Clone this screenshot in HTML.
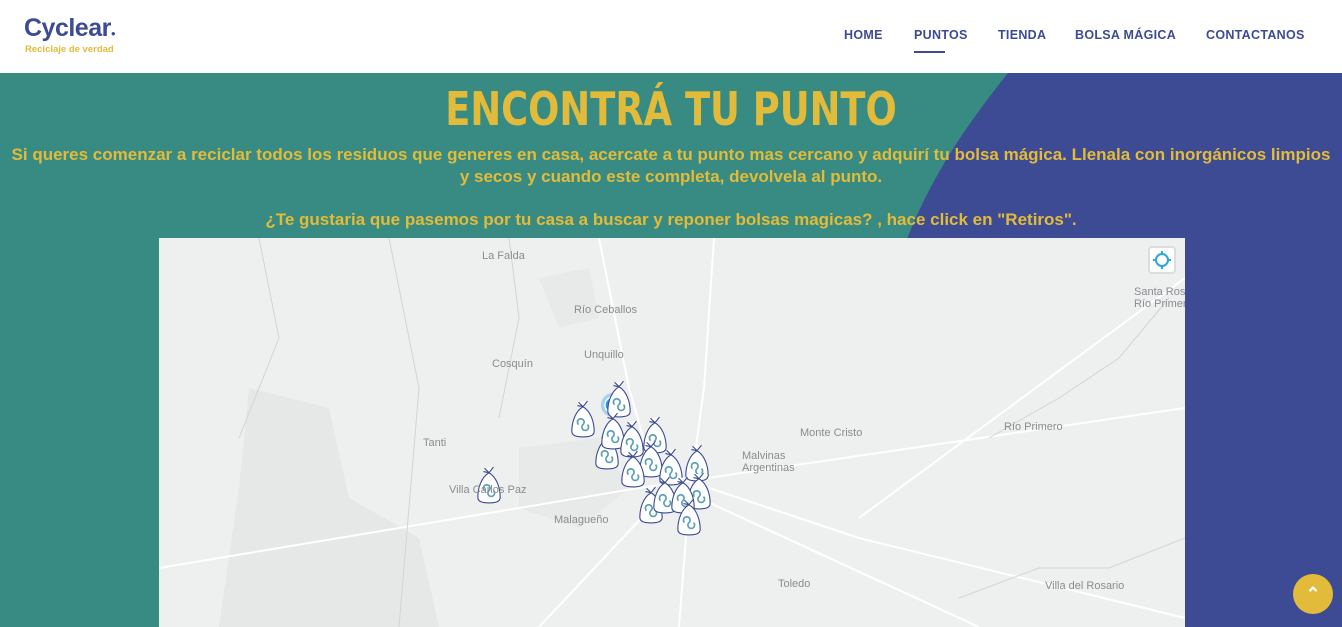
<!DOCTYPE html>
<html><head><meta charset="utf-8"><style>
*{margin:0;padding:0;box-sizing:border-box}
body{width:1342px;height:627px;overflow:hidden;font-family:"Liberation Sans",sans-serif;background:#378b82;position:relative}
header{position:absolute;top:0;left:0;width:1342px;height:73px;background:#fff;z-index:5}
.logo{position:absolute;left:24px;top:14px;color:#3c4b94;font-size:25px;font-weight:bold;letter-spacing:-0.5px}
.logo .d{color:#3c4b94;font-size:8px}
.tag{position:absolute;left:25px;top:44px;color:#e3bb3a;font-size:9.5px;font-weight:bold}
nav a{position:absolute;top:28px;font-size:12.5px;font-weight:bold;color:#3c4b94;letter-spacing:0.3px;text-decoration:none}
.u{position:absolute;left:914px;top:51px;width:31px;height:2px;background:#3c4b94}
.bg{position:absolute;left:0;top:73px}
h1{position:absolute;top:82px;left:0;width:1342px;text-align:center;color:#e3bb3a;font-size:46px;font-weight:900;font-family:"DejaVu Sans",sans-serif;transform:scaleX(0.8);transform-origin:671px 0}
p{position:absolute;left:0;width:1342px;text-align:center;color:#e3bb3a;font-size:17px;font-weight:bold;line-height:22px;font-family:"Liberation Sans",sans-serif}
.map{position:absolute;left:159px;top:238px;width:1026px;height:389px;background:#eeefef;overflow:hidden}
.lbl{position:absolute;font-size:11px;color:#8a8d90;white-space:nowrap}
.loc{position:absolute;left:989px;top:8px;width:28px;height:28px;background:#fff;border:2px solid #ddd;border-radius:4px}
.top{position:absolute;left:1293px;top:574px;width:40px;height:40px;border-radius:50%;background:#e3bb3a;color:#fff;text-align:center;font-size:18px;line-height:40px;font-weight:bold}
</style></head><body>
<header>
<div class="logo">Cyclear<span class="d">●</span></div>
<div class="tag">Reciclaje de verdad</div>
<nav><a style="left:844px">HOME</a><a style="left:914px">PUNTOS</a><a style="left:998px">TIENDA</a><a style="left:1075px">BOLSA MÁGICA</a><a style="left:1206px">CONTACTANOS</a></nav>
<div class="u"></div>
</header>
<svg class="bg" width="1342" height="554"><path d="M1008 0 C960 60 920 120 895 200 C870 280 870 400 880 554 L1342 554 L1342 0Z" fill="#3c4b94"/></svg>
<h1>ENCONTRÁ TU PUNTO</h1>
<p style="top:144px;padding:0 6px">Si queres comenzar a reciclar todos los residuos que generes en casa, acercate a tu punto mas cercano y adquirí tu bolsa mágica. Llenala con inorgánicos limpios y secos y cuando este completa, devolvela al punto.</p>
<p style="top:209px">¿Te gustaria que pasemos por tu casa a buscar y reponer bolsas magicas? , hace click en "Retiros".</p>
<div class="map">
<svg width="1026" height="389" style="position:absolute;left:0;top:0">
<defs><symbol id="b" viewBox="0 0 24 34"><path d="M8 2 L12 6 L16 1 M12 6 L7 5 M12 6 C5 10 2 20 2 28 C2 32 6 33 12 33 C18 33 22 32 22 28 C22 20 19 10 12 6Z" fill="#fff" stroke="#3c4b94" stroke-width="1"/><path d="M8 22 a3 3 0 1 1 4 0 a3 3 0 1 0 4 0" fill="none" stroke="#5aa0b8" stroke-width="1.5"/></symbol></defs>
<path d="M90 150 L170 170 L190 260 L260 300 L280 389 L60 389 L80 250Z" fill="#e6e7e7"/>
<path d="M380 40 L430 30 L440 80 L400 90Z" fill="#e8e9e9"/>
<path d="M360 210 L440 200 L470 250 L420 290 L360 270Z" fill="#e8e9e9"/>
<g stroke="#fff" stroke-width="2" fill="none">
<path d="M555 0 L545 150 L530 260 L520 389"/>
<path d="M0 330 L300 280 L480 250 L1026 170"/>
<path d="M550 250 L700 300 L1026 380"/>
<path d="M540 260 L820 389"/>
<path d="M520 240 L380 389"/>
<path d="M440 0 L470 150 L490 220"/>
<path d="M1026 40 L700 280"/>
</g>
<g stroke="#d3d4d5" stroke-width="1" fill="none">
<path d="M1010 60 L960 120 L900 160 L830 200"/>
<path d="M1026 300 L950 330 L880 330 L800 360"/>
<path d="M350 0 L360 80 L340 180"/>
<path d="M100 0 L120 100 L80 200"/>
<path d="M230 0 L260 150 L240 389"/>
</g>
<circle cx="454" cy="167" r="12" fill="#2196f3" opacity="0.35"/>
<circle cx="454" cy="167" r="8" fill="#2196f3" stroke="#fff" stroke-width="1.5"/>
<g>
<use href="#b" x="410" y="162" width="28" height="38"/>
<use href="#b" x="446" y="142" width="28" height="38"/>
<use href="#b" x="434" y="194" width="28" height="38"/>
<use href="#b" x="440" y="174" width="28" height="38"/>
<use href="#b" x="459" y="182" width="28" height="38"/>
<use href="#b" x="482" y="178" width="28" height="38"/>
<use href="#b" x="478" y="202" width="28" height="38"/>
<use href="#b" x="460" y="212" width="28" height="38"/>
<use href="#b" x="498" y="210" width="28" height="38"/>
<use href="#b" x="524" y="206" width="28" height="38"/>
<use href="#b" x="526" y="234" width="28" height="38"/>
<use href="#b" x="478" y="248" width="28" height="38"/>
<use href="#b" x="492" y="238" width="28" height="38"/>
<use href="#b" x="510" y="238" width="28" height="38"/>
<use href="#b" x="516" y="260" width="28" height="38"/>
<use href="#b" x="316" y="228" width="28" height="38"/>
</g>
</svg>
<div class="lbl" style="left:323px;top:12px">La Falda</div>
<div class="lbl" style="left:415px;top:66px">Río Ceballos</div>
<div class="lbl" style="left:425px;top:111px">Unquillo</div>
<div class="lbl" style="left:333px;top:120px">Cosquín</div>
<div class="lbl" style="left:264px;top:199px">Tanti</div>
<div class="lbl" style="left:290px;top:246px">Villa Carlos Paz</div>
<div class="lbl" style="left:395px;top:276px">Malagueño</div>
<div class="lbl" style="left:641px;top:189px">Monte Cristo</div>
<div class="lbl" style="left:583px;top:212px;line-height:12px">Malvinas<br>Argentinas</div>
<div class="lbl" style="left:845px;top:183px">Río Primero</div>
<div class="lbl" style="left:975px;top:48px;line-height:12px">Santa Rosa<br>Río Primero</div>
<div class="lbl" style="left:619px;top:340px">Toledo</div>
<div class="lbl" style="left:886px;top:342px">Villa del Rosario</div>
<div class="loc"><svg width="24" height="24" viewBox="0 0 24 24"><circle cx="12" cy="12" r="6" fill="none" stroke="#29a8e0" stroke-width="2"/><path d="M12 3v4M12 17v4M3 12h4M17 12h4" stroke="#29a8e0" stroke-width="2"/></svg></div>
</div>
<div class="top">⌃</div>
</body></html>
